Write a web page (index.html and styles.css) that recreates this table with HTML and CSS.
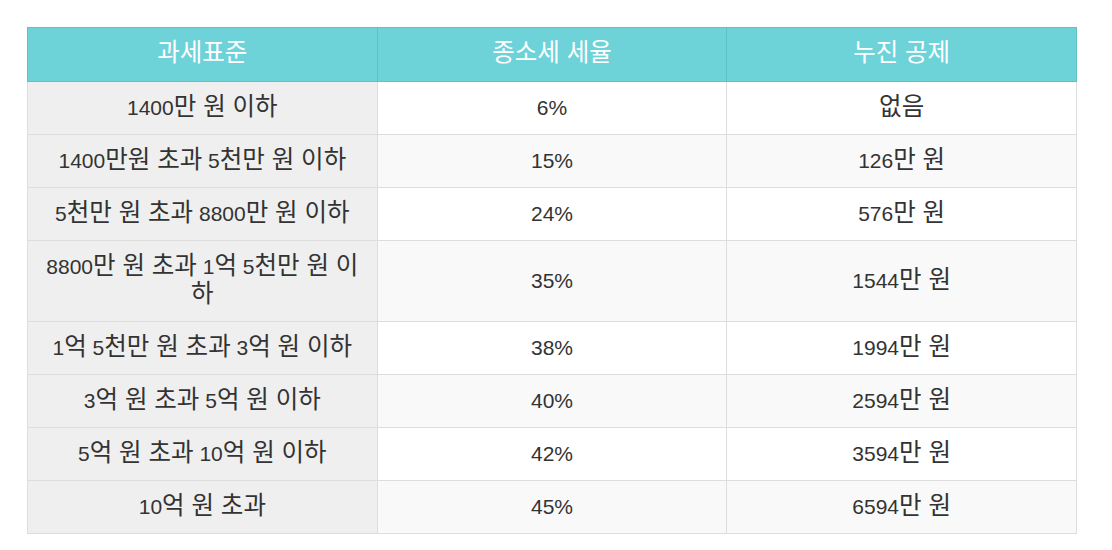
FILE: index.html
```html
<!DOCTYPE html>
<html lang="ko">
<head>
<meta charset="utf-8">
<link rel="stylesheet" href="styles.css">
</head>
<body>
<table class="tax">
  <thead>
    <tr><th><span class="k">과세표준</span></th><th><span class="k">종소세 세율</span></th><th><span class="k">누진 공제</span></th></tr>
  </thead>
  <tbody>
    <tr><td>1400<span class="k">만 원 이하</span></td><td>6%</td><td><span class="k">없음</span></td></tr>
    <tr><td>1400<span class="k">만원 초과</span> 5<span class="k">천만 원 이하</span></td><td>15%</td><td>126<span class="k">만 원</span></td></tr>
    <tr><td>5<span class="k">천만 원 초과</span> 8800<span class="k">만 원 이하</span></td><td>24%</td><td>576<span class="k">만 원</span></td></tr>
    <tr><td>8800<span class="k">만 원 초과</span> 1<span class="k">억</span> 5<span class="k">천만 원 이하</span></td><td>35%</td><td>1544<span class="k">만 원</span></td></tr>
    <tr><td>1<span class="k">억</span> 5<span class="k">천만 원 초과</span> 3<span class="k">억 원 이하</span></td><td>38%</td><td>1994<span class="k">만 원</span></td></tr>
    <tr><td>3<span class="k">억 원 초과</span> 5<span class="k">억 원 이하</span></td><td>40%</td><td>2594<span class="k">만 원</span></td></tr>
    <tr><td>5<span class="k">억 원 초과</span> 10<span class="k">억 원 이하</span></td><td>42%</td><td>3594<span class="k">만 원</span></td></tr>
    <tr><td>10<span class="k">억 원 초과</span></td><td>45%</td><td>6594<span class="k">만 원</span></td></tr>
  </tbody>
</table>
</body>
</html>
```
FILE: styles.css
```css
html, body { margin: 0; padding: 0; background: #fff; }
body { padding: 27px; }
.tax {
  width: 1050px;
  border-collapse: collapse;
  table-layout: fixed;
  font-family: "Liberation Sans", "Noto Sans CJK KR", sans-serif;
  font-size: 21px;
  color: #333;
}
.tax th, .tax td {
  text-align: center;
  vertical-align: middle;
  line-height: 28px;
  padding: 12px 12px;
  border: 1px solid #dddddd;
  font-weight: normal;
}
.tax th {
  background: #6dd3d9;
  color: #fff;
  border: 1px solid #5fc1c8;
  padding: 12px 12px 13px;
}
.k {
  font-family: "Noto Sans CJK KR", sans-serif;
  font-size: 24.5px;
  line-height: 0;
}
.tax td:first-child { background: #efefef; }
.tax tbody tr:nth-child(even) td { background: #f9f9f9; }
.tax tbody tr:nth-child(even) td:first-child { background: #efefef; }
```
